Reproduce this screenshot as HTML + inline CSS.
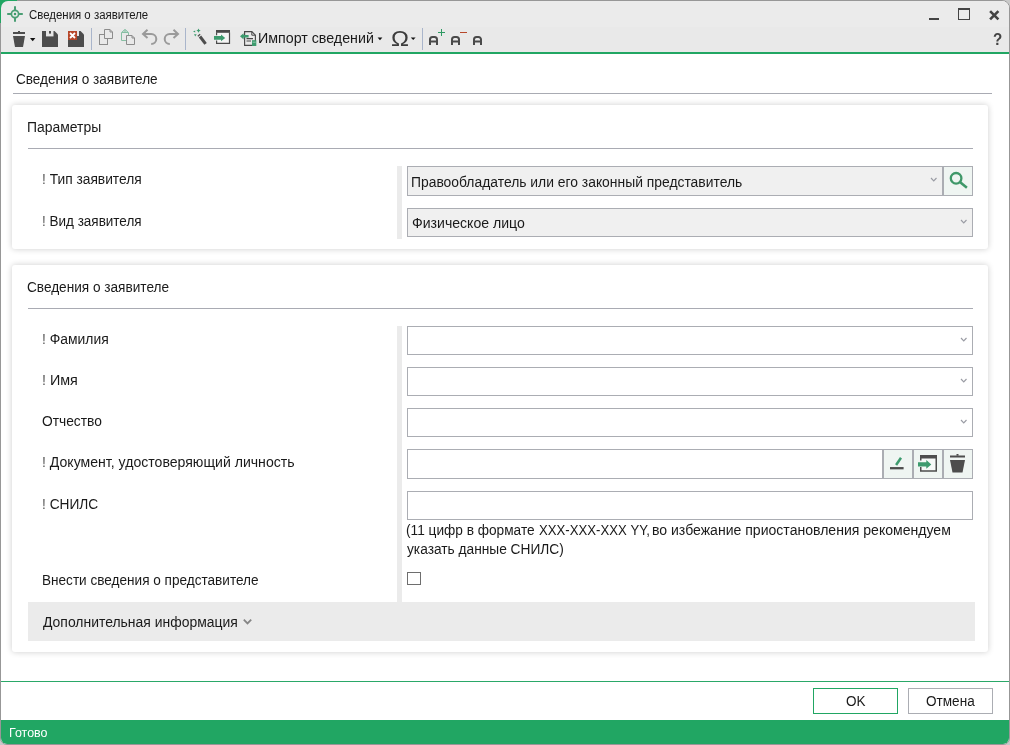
<!DOCTYPE html>
<html lang="ru">
<head>
<meta charset="utf-8">
<title>Сведения о заявителе</title>
<style>
*{box-sizing:border-box;margin:0;padding:0}
html,body{width:1010px;height:745px;overflow:hidden;background:#c9c9c9}
body{position:relative;font-family:"Liberation Sans",sans-serif;color:#1a1a1a}
.win{position:absolute;left:0;top:0;width:1010px;height:745px;background:#fff;border:1px solid #979797;border-radius:8px 8px 7px 7px;overflow:hidden}
.abs{position:absolute}
.tbar{position:absolute;left:1px;top:1px;width:1008px;height:51px;background:#ebebeb;border-radius:7px 7px 0 0}
.gline{position:absolute;left:1px;top:52px;width:1008px;height:2px;background:#21a663}
.gline2{position:absolute;left:1px;top:681px;width:1008px;height:1px;background:#2aa868}
.status{position:absolute;left:1px;top:720px;width:1008px;height:24px;background:#21a663;border-radius:0 0 6px 6px}
.t{position:absolute;white-space:nowrap;line-height:1}
#txt{position:absolute;left:0;top:0;width:1010px;height:745px;will-change:transform}
.card{position:absolute;background:#fff;border-radius:3px;box-shadow:0 0 6px rgba(0,0,0,.2)}
.hl{position:absolute;height:1px;background:#a9abb3}
.split{position:absolute;left:397px;width:5px;background:#ebebeb}
.inp{position:absolute;left:407px;width:566px;height:29px;border:1px solid #abadb3;background:#fff}
.cmb{position:absolute;left:407px;height:30px;border:1px solid #abadb3;background:#f0f0f0}
.sbtn{position:absolute;width:30px;height:30px;border:1px solid #abadb3;background:#eff5f2}
.btn{position:absolute;top:688px;width:85px;height:26px;background:#fff;border:1px solid #abadb3}
</style>
</head>
<body>
<div class="win"></div>
<div class="abs" style="left:0;top:0;width:17px;height:23px;background:#21a663"></div>
<div class="tbar"></div>
<div class="abs" style="left:1px;top:27px;width:1008px;height:25px;background:#e9e9e9"></div>
<div class="gline"></div>

<!-- title + toolbar text -->

<!-- page header -->
<div class="hl" style="left:13px;top:93px;width:979px"></div>

<!-- card 1 -->
<div class="card" style="left:12px;top:105px;width:976px;height:144px"></div>
<div class="hl" style="left:28px;top:148px;width:945px"></div>
<div class="split" style="top:166px;height:73px"></div>
<div class="cmb" style="top:166px;width:536px"></div>
<div class="sbtn" style="left:943px;top:166px"></div>
<div class="cmb" style="top:208px;width:566px;height:29px"></div>

<!-- card 2 -->
<div class="card" style="left:12px;top:265px;width:976px;height:387px"></div>
<div class="hl" style="left:28px;top:308px;width:945px"></div>
<div class="split" style="top:326px;height:276px"></div>
<div class="inp" style="top:326px"></div>
<div class="inp" style="top:367px"></div>
<div class="inp" style="top:408px"></div>
<div class="inp" style="top:449px;width:476px;height:30px"></div>
<div class="sbtn" style="left:883px;top:449px"></div>
<div class="sbtn" style="left:913px;top:449px"></div>
<div class="sbtn" style="left:943px;top:449px"></div>
<div class="inp" style="top:491px"></div>
<div class="abs" style="left:407px;top:572px;width:14px;height:13px;border:1px solid #6e6e6e;background:#fff"></div>
<div class="abs" style="left:28px;top:602px;width:947px;height:39px;background:#ebebeb"></div>

<!-- bottom -->
<div class="gline2"></div>
<div class="btn" style="left:813px;border-color:#21a663"></div>
<div class="btn" style="left:908px"></div>
<div class="status"></div>

<!-- TEXT LAYER -->
<div id="txt">
<div class="t" id="t_title" style="left:29.19px;top:9px;font-size:12px;transform:scaleX(0.9521);transform-origin:0 0">Сведения о заявителе</div>
<div class="t" id="t_import" style="left:257.71px;top:31px;font-size:14.5px;transform:scaleX(0.9819);transform-origin:0 0">Импорт сведений</div>
<div class="t" id="t_omega" style="left:391.3px;top:28.7px;font-size:21.3px;color:#3c3c3c;transform:scaleX(1.13);transform-origin:0 0">Ω</div>
<div class="t" id="t_help" style="left:992.6px;top:31.2px;font-size:16.5px;font-weight:bold;color:#444;transform:scaleX(0.92);transform-origin:0 0">?</div>
<div class="t" id="t_head" style="left:15.56px;top:72px;font-size:14px;transform:scaleX(0.9695);transform-origin:0 0">Сведения о заявителе</div>
<div class="t" id="t_param" style="left:26.85px;top:120px;font-size:14px;transform:scaleX(0.9942);transform-origin:0 0">Параметры</div>
<div class="t" id="t_l1" style="left:41.74px;top:172px;font-size:14px;transform:scaleX(0.9831);transform-origin:0 0"><span style="color:#5a5a5a">!</span> Тип заявителя</div>
<div class="t" id="t_l2" style="left:41.76px;top:214px;font-size:14px;transform:scaleX(0.9636);transform-origin:0 0"><span style="color:#5a5a5a">!</span> Вид заявителя</div>
<div class="t" id="t_c1" style="left:411.45px;top:175px;font-size:14px;transform:scaleX(0.9910);transform-origin:0 0">Правообладатель или его законный представитель</div>
<div class="t" id="t_c2" style="left:411.75px;top:216px;font-size:14px;transform:scaleX(1.0056);transform-origin:0 0">Физическое лицо</div>
<div class="t" id="t_h2" style="left:26.66px;top:280px;font-size:14px;transform:scaleX(0.9722);transform-origin:0 0">Сведения о заявителе</div>
<div class="t" id="t_l3" style="left:41.73px;top:332px;font-size:14px;transform:scaleX(0.9927);transform-origin:0 0"><span style="color:#5a5a5a">!</span> Фамилия</div>
<div class="t" id="t_l4" style="left:41.69px;top:373px;font-size:14px;transform:scaleX(1.0239);transform-origin:0 0"><span style="color:#5a5a5a">!</span> Имя</div>
<div class="t" id="t_l5" style="left:41.61px;top:414px;font-size:14px;transform:scaleX(0.9842);transform-origin:0 0">Отчество</div>
<div class="t" id="t_l6" style="left:41.71px;top:455px;font-size:14px;transform:scaleX(1.0063);transform-origin:0 0"><span style="color:#5a5a5a">!</span> Документ, удостоверяющий личность</div>
<div class="t" id="t_l7" style="left:41.74px;top:497px;font-size:14px;transform:scaleX(0.9801);transform-origin:0 0"><span style="color:#5a5a5a">!</span> СНИЛС</div>
<div class="t" id="t_l8" style="left:41.96px;top:573px;font-size:14px;transform:scaleX(0.9700);transform-origin:0 0">Внести сведения о представителе</div>
<div class="t" id="t_n1" style="left:406.12px;top:523px;font-size:14px;transform:scaleX(0.9767);transform-origin:0 0">(11 цифр в формате</div>
<div class="t" id="t_n1b" style="left:538.97px;top:523px;font-size:14px;transform:scaleX(0.9408);transform-origin:0 0">ХХХ-ХХХ-ХХХ YY,</div>
<div class="t" id="t_n1c" style="left:652.00px;top:523px;font-size:14px;transform:scaleX(1.0036);transform-origin:0 0">во избежание приостановления рекомендуем</div>
<div class="t" id="t_n2" style="left:406.66px;top:542px;font-size:14px;transform:scaleX(0.9802);transform-origin:0 0">указать данные СНИЛС)</div>
<div class="t" id="t_more" style="left:42.77px;top:615px;font-size:14px;transform:scaleX(0.9953);transform-origin:0 0">Дополнительная информация</div>
<div class="t" id="t_ok" style="left:846.32px;top:694px;font-size:14px;transform:scaleX(0.9654);transform-origin:0 0">OK</div>
<div class="t" id="t_cancel" style="left:926.32px;top:694px;font-size:14px;transform:scaleX(0.9692);transform-origin:0 0">Отмена</div>
<div class="t" id="t_ready" style="left:8.66px;top:727px;font-size:12px;color:#fff;transform:scaleX(1.0385);transform-origin:0 0">Готово</div>
</div>
<!-- ICONS -->
<svg class="abs" style="left:0;top:0" width="1010" height="745" viewBox="0 0 1010 745">
<g id="ico_app" fill="none" stroke="#4a9e74" stroke-width="2">
<circle cx="15" cy="14" r="3.6" stroke-width="1.7"/>
<path d="M15 6.2V10.4M15 17.6V21.8M7.2 14H11.4M18.6 14H22.8"/>
<circle cx="15" cy="14" r="1.25" fill="#3d9a6b" stroke="none"/>
</g>
<!-- window controls -->
<g fill="none" stroke="#444">
<path d="M929 19H939" stroke-width="2"/>
<rect x="958.5" y="9.5" width="11" height="10" stroke-width="1"/>
<path d="M958 9H970" stroke-width="2"/>
<path d="M990.100 11.100L998.400 19.400M998.400 11.100L990.100 19.400" stroke-width="2.600"/>
</g>
<!-- trash + arrow -->
<g fill="#4d4d4d">
<rect x="13" y="32" width="12" height="2"/><rect x="18" y="31" width="2" height="1.2"/>
<path d="M13 36H25L23 47H15Z"/>
<path d="M30 38H35.4L32.7 41.2Z" fill="#111"/>
<!-- save -->
<path d="M42 31H54.5L58 34.5V47H42Z"/>
<rect x="46" y="31" width="7.5" height="5.4" fill="#e6e6e6"/>
<rect x="49" y="31" width="2" height="2.6"/>
<!-- save x -->
<path d="M68 31H80.5L84 34.5V47H68Z"/>
<rect x="77" y="31" width="2" height="5" fill="#e6e6e6"/>
<rect x="68" y="31" width="9" height="9" fill="#b7472a"/>
<path d="M70 33L75 38M75 33L70 38" stroke="#fff" stroke-width="1.8" fill="none"/>
</g>
<!-- separators -->
<g fill="#a9b5cb"><rect x="91" y="28" width="1" height="22"/><rect x="185" y="28" width="1" height="22"/><rect x="422" y="28" width="1" height="22"/></g>
<!-- copy -->
<g fill="#e9e9e9" stroke="#8c8c8c" stroke-width="1">
<rect x="99.5" y="34.5" width="8" height="10"/>
<path d="M104.500 29.500H110L112.500 32V38.500H104.500Z"/>
<path d="M110 29.500V32H112.500" fill="none"/>
<!-- paste -->
<path d="M121.500 32.500H128.500V40.500H121.500Z" stroke="#86bfa3"/>
<path d="M121.800 32.300L125 29.300L128.200 32.300" stroke="#86bfa3" fill="none"/><circle cx="125" cy="31.300" r="0.900" stroke="#86bfa3" stroke-width="0.800" fill="none"/>
<path d="M126.500 35.500H132L134.500 38V44.500H126.500Z"/>
<path d="M132 35.500V38H134.500" fill="none"/>
</g>
<!-- undo / redo -->
<g fill="none" stroke="#9a9a9a" stroke-width="2">
<path d="M147.500 29.700L143 33.900L147.500 38.100"/>
<path d="M143.500 33.900H151.200A5.100 5.100 0 0 1 151.200 44.100"/>
<path d="M173.500 29.700L178 33.900L173.500 38.100"/>
<path d="M177.500 33.900H169.800A5.100 5.100 0 0 0 169.800 44.100"/>
</g>
<!-- wand -->
<g>
<path d="M200 36.500L205.600 43.800" stroke="#4d4d4d" stroke-width="3" fill="none"/>
<path d="M198.600 34.800L199.400 35.800" stroke="#4d4d4d" stroke-width="3" fill="none"/>
<path d="M198.500 28.600L199.300 30L200.700 30.600L199.300 31.200L198.500 32.800L197.700 31.200L196.300 30.600L197.700 30Z" fill="#3d9b6e"/>
<path d="M193 31.400L195.200 30.400V32.400Z" fill="#3d9b6e"/>
<path d="M194 34.200H196.600L195.300 36.400Z" fill="#3d9b6e"/>
</g>
<!-- window arrow (toolbar) -->
<g id="winarrow">
<rect x="217" y="32" width="12" height="11.500" fill="#f4f4f4"/>
<path d="M216 30H230V32.800H216Z" fill="#4a4a4a"/>
<path d="M216.600 32.500V35.300M216.600 40.600V43.400H229.500V32.500" fill="none" stroke="#4a4a4a" stroke-width="1.200"/>
<path d="M214 36.100H221V34.400L225.200 37.900L221 41.300V39.800H214Z" fill="#3d9b6e"/>
</g>
<!-- import doc -->
<g>
<path d="M244.600 31.600H251.800L255.400 35.200V45.400H244.600Z" fill="#e9e9e9" stroke="#484848" stroke-width="1.150"/>
<path d="M251.800 31.600V35.200H255.400" fill="none" stroke="#484848" stroke-width="1"/>
<path d="M246.500 38.600H253M246.500 41H251" stroke="#484848" stroke-width="1.100"/>
<path d="M240 36.300L243.600 33.200V35H248.600V37.600H243.600V39.400Z" fill="#3d9b6e"/>
<rect x="252" y="40.200" width="4.300" height="5.800" fill="#3d9b6e"/>
<rect x="252.600" y="41.600" width="3.100" height="1.300" fill="#7dbf9e"/>
</g>
<!-- dropdown arrows -->
<path d="M377.600 37.600H382.400L380 40.200Z" fill="#111"/>
<path d="M410.800 37.400H415.600L413.200 40Z" fill="#111"/>
<!-- A+ A- A -->
<g fill="none" stroke="#4a4a4a" stroke-width="2">
<path d="M430 45V39.500A2.500 2.500 0 0 1 432.500 37H434.500A2.500 2.500 0 0 1 437 39.500V45M430 41.500H437"/>
<path d="M452 45V39.500A2.500 2.500 0 0 1 454.500 37H456.500A2.500 2.500 0 0 1 459 39.500V45M452 41.500H459"/>
<path d="M474 45V39.500A2.500 2.500 0 0 1 476.500 37H478.500A2.500 2.500 0 0 1 481 39.500V45M474 41.500H481"/>
</g>
<path d="M438 32.500H445M441.500 29V36" stroke="#2e9a63" stroke-width="1" fill="none"/>
<path d="M460 32.500H467" stroke="#b7472a" stroke-width="1" fill="none"/>
<!-- combobox chevrons -->
<g fill="none" stroke="#9a9ca4" stroke-width="1.200">
<path d="M931 178L933.750 180.800L936.500 178"/>
<path d="M961 220L963.750 222.800L966.500 220"/>
<path d="M961 338L963.750 340.800L966.500 338"/>
<path d="M961 379L963.750 381.800L966.500 379"/>
<path d="M961 420L963.750 422.800L966.500 420"/>
</g>
<path d="M243.800 619.700L247.500 623.500L251.200 619.700" fill="none" stroke="#858585" stroke-width="1.800"/>
<!-- search -->
<g fill="none" stroke="#3f9869">
<circle cx="956.100" cy="178.300" r="5.300" stroke-width="2.300"/>
<path d="M959.900 182.100L966.900 187.700" stroke-width="2.600"/>
</g>
<!-- pencil -->
<path d="M896.100 465L901 457.700" stroke="#3d9b6e" stroke-width="2.500" fill="none"/>
<path d="M890 468.200H903.600" stroke="#4d4d4d" stroke-width="2.300" fill="none"/>
<!-- window arrow (form) -->
<g>
<rect x="921" y="456" width="15" height="15" fill="#f6f9f7"/>
<path d="M920 455H937V458.500H920Z" fill="#4d4d4d"/>
<path d="M920.750 458V460.500M920.750 467V471H936.250V458" fill="none" stroke="#4d4d4d" stroke-width="1.500"/>
<path d="M918 462.300H926.300V460.100L931.300 464.400L926.300 468.700V466.500H918Z" fill="#3d9b6e"/>
</g>
<!-- trash (form) -->
<g fill="#4d4d4d">
<rect x="950" y="455.500" width="15" height="2"/><rect x="956.500" y="454" width="2" height="1.700"/>
<path d="M950 460H965L962.500 472.500H952.500Z"/>
</g>
</svg>
</body>
</html>
